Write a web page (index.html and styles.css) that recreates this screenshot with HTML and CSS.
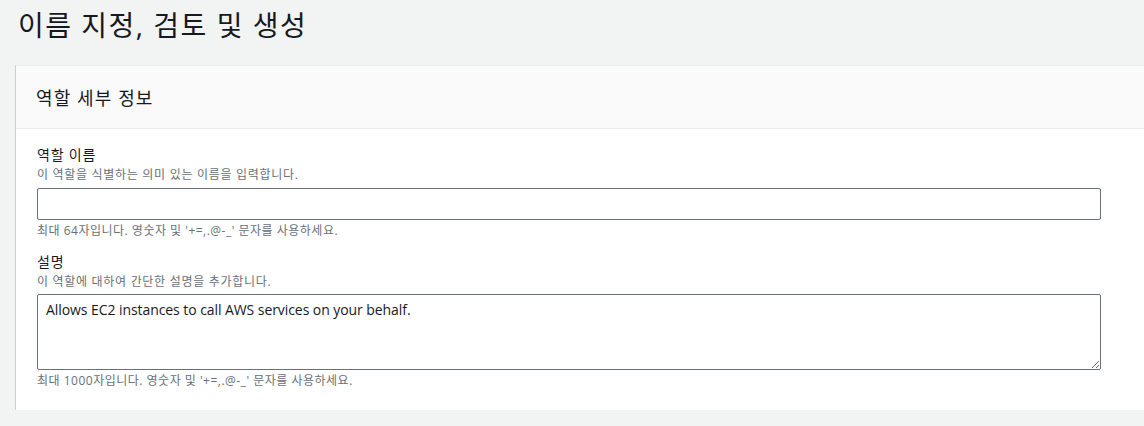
FILE: index.html
```html
<!DOCTYPE html>
<html lang="ko">
<head>
<meta charset="utf-8">
<title>이름 지정, 검토 및 생성</title>
<link rel="stylesheet" href="styles.css">
</head>
<body>
<h1 class="page-title">이름 지정, 검토 및 생성</h1>
<section class="card">
  <div class="card-header">역할 세부 정보</div>
  <div class="card-body">
    <div class="field">
      <div class="label">역할 이름</div>
      <div class="desc">이 역할을 식별하는 의미 있는 이름을 입력합니다.</div>
      <input class="control input" type="text">
      <div class="hint">최대 64자입니다. 영숫자 및 '+=,.@-_' 문자를 사용하세요.</div>
    </div>
    <div class="field">
      <div class="label">설명</div>
      <div class="desc">이 역할에 대하여 간단한 설명을 추가합니다.</div>
      <textarea class="control textarea">Allows EC2 instances to call AWS services on your behalf.</textarea>
      <div class="hint">최대 1000자입니다. 영숫자 및 '+=,.@-_' 문자를 사용하세요.</div>
    </div>
  </div>
</section>
</body>
</html>
```
FILE: styles.css
```css
html, body {
  margin: 0;
  padding: 0;
}
body {
  background: #f2f3f3;
  font-family: "Open Sans", "Noto Sans CJK KR", sans-serif;
  color: #16191f;
  overflow: hidden;
}
.page-title {
  margin: 0;
  padding: 5px 18px 0;
  font-size: 28px;
  font-weight: 400;
  line-height: 40px;
  letter-spacing: 1.5px;
  height: 60px;
  box-sizing: border-box;
  color: #16191f;
}
.card {
  margin: 5px -40px 0 16px;
  background: #fff;
  box-shadow: 0 1px 1px 0 rgba(0, 28, 36, 0.3), -1px 0 0 0 rgba(0, 28, 36, 0.12);
}
.card-header {
  height: 64px;
  box-sizing: border-box;
  background: #fafafa;
  border-top: 1px solid #eaeded;
  border-bottom: 1px solid #eaeded;
  padding: 0 20px;
  display: flex;
  align-items: center;
  font-size: 18px;
  letter-spacing: 1.1px;
  color: #16191f;
}
.card-body {
  padding: 15px 20px 20px 21px;
  display: flex;
  flex-direction: column;
  gap: 11px;
}
.field {
  display: flex;
  flex-direction: column;
}
.label {
  font-size: 14px;
  line-height: 22px;
  letter-spacing: 0.8px;
  color: #16191f;
}
.desc, .hint {
  font-size: 12px;
  line-height: 18px;
  letter-spacing: 0.7px;
  color: #687078;
}
.hint {
  letter-spacing: 0.5px;
}
.control {
  width: 1064px;
  box-sizing: border-box;
  border: 1px solid #687078;
  border-radius: 2px;
  background: #fff;
  font-family: "Open Sans", "Noto Sans CJK KR", sans-serif;
  font-size: 14px;
  color: #16191f;
  margin: 0;
}
.input {
  height: 32px;
  margin-top: 4px;
  margin-bottom: 2px;
  padding: 4px 8px;
}
.textarea {
  height: 76px;
  margin-top: 3px;
  margin-bottom: 2px;
  padding: 4px 8px;
  line-height: 22px;
  letter-spacing: -0.07px;
  resize: vertical;
  display: block;
}
```
